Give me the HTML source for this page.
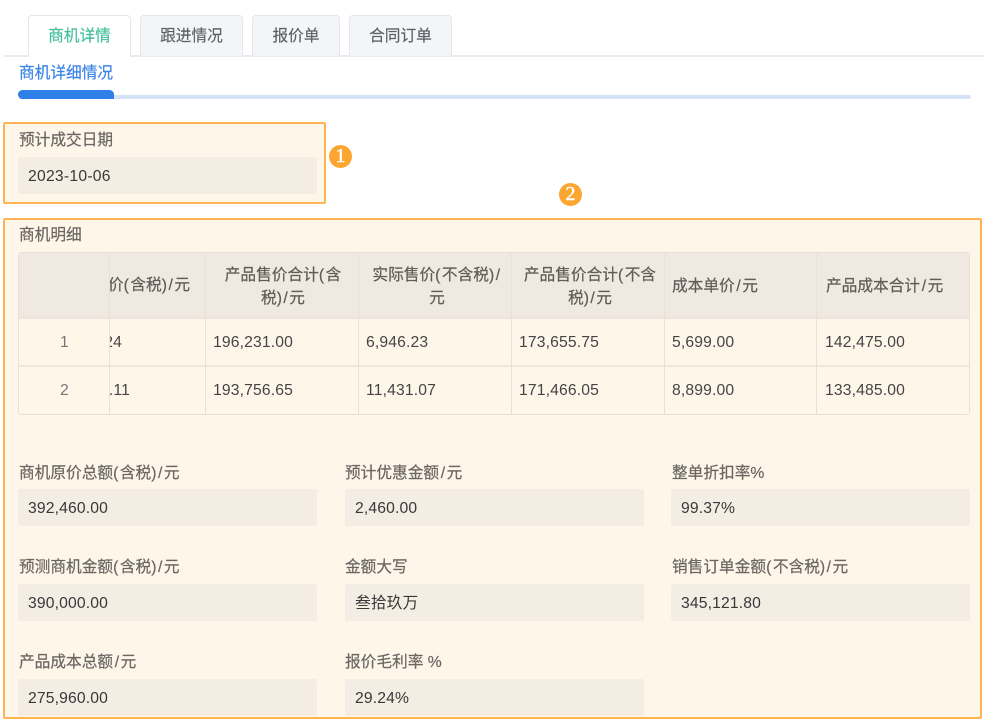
<!DOCTYPE html>
<html lang="zh"><head><meta charset="utf-8"><title>商机详情</title>
<style>
*{box-sizing:border-box}
html,body{margin:0;padding:0;background:#fff}
body{position:relative;width:986px;height:723px;overflow:hidden;font-family:"Liberation Sans","Noto Sans CJK SC",sans-serif;font-size:15.7px;color:#333}
i{font-style:normal;letter-spacing:1.5px}
b{font-weight:normal;padding:0 1.6px}
.a{position:absolute;white-space:nowrap}
.tab{position:absolute;top:15px;height:41px;background:#f4f5f7;border:1px solid #e4e7ed;border-bottom:0;border-radius:4px 4px 0 0;text-align:center;line-height:41px;color:#5c6066;-webkit-text-stroke:.15px}
.box{position:absolute;background:#fff6ea;border:2px solid #ffb454;border-radius:2px}
.lb{position:absolute;white-space:nowrap;color:#6a6662;line-height:20px;height:20px;-webkit-text-stroke:.2px}
.inp{position:absolute;background:#f4ede4;border-radius:2px;height:37px;width:299px;line-height:39px;padding-left:10px;color:#383838;letter-spacing:.15px}
.circ{position:absolute;width:23px;height:23px;border-radius:50%;background:#fca631;color:#fff;font-family:"Liberation Serif",serif;font-size:20px;line-height:23px;text-align:center;-webkit-text-stroke:.4px #fff}
.v{position:absolute;width:1px;background:#e7e1d8}
.h{position:absolute;height:2px;background:#ece6dd}
.th{position:absolute;top:253px;height:66px;display:flex;align-items:center;justify-content:center;text-align:center;line-height:23px;color:#5f5b57;padding-top:1px;-webkit-text-stroke:.2px}
.td{position:absolute;white-space:nowrap;line-height:24px;color:#454545;letter-spacing:.15px}
</style></head><body>

<div class="a" style="left:4px;top:55px;width:980px;height:2px;background:#e8eaee"></div>
<div class="tab" style="left:28px;width:103px;height:42px;background:#fff;color:#3fbf99;z-index:2">商机详情</div>
<div class="tab" style="left:140px;width:103px">跟进情况</div>
<div class="tab" style="left:252px;width:88px">报价单</div>
<div class="tab" style="left:349px;width:103px">合同订单</div>

<div class="a" style="left:19px;top:63px;line-height:21px;color:#3a84e6;-webkit-text-stroke:.2px">商机详细情况</div>
<div class="a" style="left:19px;top:95px;width:952px;height:4px;background:#d5e3fa;border-radius:0 2px 2px 0"></div>
<div class="a" style="left:18px;top:90px;width:96px;height:9px;background:#2f7fe8;border-radius:7px 7px 0 7px / 7px 7px 0 7px"></div>

<div class="box" style="left:3px;top:122px;width:323px;height:82px"></div>
<div class="lb" style="left:19px;top:131px">预计成交日期</div>
<div class="inp" style="left:18px;top:157px;letter-spacing:.25px">2023-10-06</div>
<div class="circ" style="left:329px;top:145px">1</div>
<div class="circ" style="left:559px;top:183px">2</div>

<div class="box" style="left:3px;top:218px;width:979px;height:501px"></div>
<div class="lb" style="left:19px;top:226px">商机明细</div>

<!-- table -->
<div class="a" style="left:18px;top:252px;width:952px;height:163px;border:1px solid #e7e1d8;border-radius:3px"></div>
<div class="a" style="left:19px;top:253px;width:950px;height:65px;background:#efe9e1;border-radius:3px 3px 0 0"></div>
<div class="h" style="left:19px;top:317px;width:950px"></div>
<div class="h" style="left:19px;top:365px;width:950px"></div>
<div class="v" style="left:109px;top:253px;height:161px"></div>
<div class="v" style="left:205px;top:253px;height:161px"></div>
<div class="v" style="left:358px;top:253px;height:161px"></div>
<div class="v" style="left:511px;top:253px;height:161px"></div>
<div class="v" style="left:664px;top:253px;height:161px"></div>
<div class="v" style="left:816px;top:253px;height:161px"></div>

<div class="a" style="left:110px;top:252px;width:95px;height:163px;overflow:hidden">
  <div class="a" style="right:15px;top:22px;line-height:23px;color:#5f5b57;-webkit-text-stroke:.2px">产品原价<i>(</i>含税<i>)/</i>元</div>
  <div class="a" style="right:83px;top:79px;line-height:24px;color:#454545;letter-spacing:.15px">7,849.24</div>
  <div class="a" style="right:75px;top:127px;line-height:24px;color:#454545;letter-spacing:.15px">12,916.11</div>
</div>
<div class="th" style="left:218px;width:130px"><div>产品售价合计<i>(</i>含税<i>)/</i>元</div></div>
<div class="th" style="left:367px;width:140px"><div>实际售价<i>(</i>不含税<i>)/</i>元</div></div>
<div class="th" style="left:520px;width:140px"><div>产品售价合计<i>(</i>不含税<i>)/</i>元</div></div>
<div class="th" style="left:672px;width:140px;justify-content:flex-start;text-align:left"><div>成本单价<b>/</b>元</div></div>
<div class="th" style="left:826px;width:140px;justify-content:flex-start;text-align:left"><div>产品成本合计<b>/</b>元</div></div>

<div class="td" style="left:60px;top:331px;color:#777">1</div>
<div class="td" style="left:60px;top:379px;color:#777">2</div>
<div class="td" style="left:213px;top:331px">196,231.00</div>
<div class="td" style="left:213px;top:379px">193,756.65</div>
<div class="td" style="left:366px;top:331px">6,946.23</div>
<div class="td" style="left:366px;top:379px">11,431.07</div>
<div class="td" style="left:519px;top:331px">173,655.75</div>
<div class="td" style="left:519px;top:379px">171,466.05</div>
<div class="td" style="left:672px;top:331px">5,699.00</div>
<div class="td" style="left:672px;top:379px">8,899.00</div>
<div class="td" style="left:825px;top:331px">142,475.00</div>
<div class="td" style="left:825px;top:379px">133,485.00</div>

<!-- fields -->
<div class="lb" style="left:19px;top:464px">商机原价总额<i>(</i>含税<i>)/</i>元</div>
<div class="inp" style="left:18px;top:489px">392,460.00</div>
<div class="lb" style="left:345px;top:464px">预计优惠金额<b>/</b>元</div>
<div class="inp" style="left:345px;top:489px">2,460.00</div>
<div class="lb" style="left:672px;top:464px">整单折扣率%</div>
<div class="inp" style="left:671px;top:489px">99.37%</div>

<div class="lb" style="left:19px;top:558px">预测商机金额<i>(</i>含税<i>)/</i>元</div>
<div class="inp" style="left:18px;top:584px">390,000.00</div>
<div class="lb" style="left:345px;top:558px">金额大写</div>
<div class="inp" style="left:345px;top:584px">叁拾玖万</div>
<div class="lb" style="left:672px;top:558px">销售订单金额<i>(</i>不含税<i>)/</i>元</div>
<div class="inp" style="left:671px;top:584px">345,121.80</div>

<div class="lb" style="left:19px;top:653px">产品成本总额<b>/</b>元</div>
<div class="inp" style="left:18px;top:679px">275,960.00</div>
<div class="lb" style="left:345px;top:653px">报价毛利率 %</div>
<div class="inp" style="left:345px;top:679px">29.24%</div>

</body></html>
